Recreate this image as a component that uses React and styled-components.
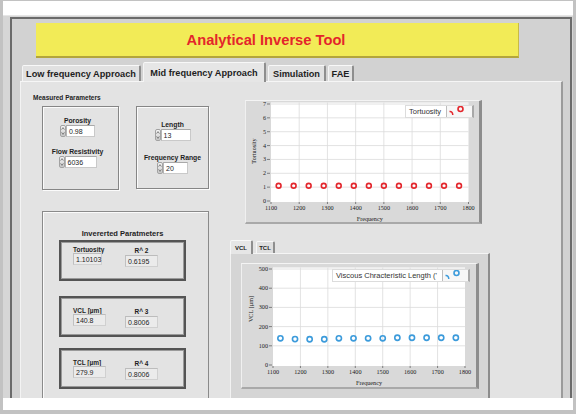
import styled, { createGlobalStyle } from "styled-components";

const GlobalStyle = createGlobalStyle`
  html, body { margin: 0; padding: 0; background: #c2c2c2; }
  body { font-family: "Liberation Sans", Arial, sans-serif; color: #1e1e1e; }
`;

const Screen = styled.div`
  box-sizing: border-box;
  width: 576px;
  height: 414px;
  padding: 1px 3px 4px 3px;
  background: #c2c2c2;
  overflow: hidden;
`;

const Sheet = styled.div`
  box-sizing: border-box;
  height: 100%;
  display: flex;
  flex-direction: column;
  padding: 14px 0 12px;
  background: #fff;
`;

const Window = styled.div`
  flex: 1;
  min-height: 0;
  display: flex;
  padding: 1px 1px 0 7px;
  border-top: 1px solid #e6e6e6;
  background: #d6d6d6;
`;

const Frame = styled.div`
  flex: 1;
  min-width: 0;
  display: flex;
  flex-direction: column;
  border: 2px solid #6b6b6b;
  border-bottom: none;
  background: #d2d2d2;
  overflow: hidden;
`;

const Banner = styled.div`
  box-sizing: border-box;
  height: 35px;
  margin: 4px 51px 0 24px;
  padding-right: 22px;
  display: flex;
  align-items: center;
  justify-content: center;
  background: #f2eb57;
  border-bottom: 2px solid #b3a53c;
  border-right: 1px solid #c9bb44;
`;

const Title = styled.h1`
  margin: 0;
  font-size: 14.7px;
  font-weight: bold;
  color: #e4252b;
`;

const TabRow = styled.div`
  display: flex;
  align-items: flex-end;
  gap: 2px;
  height: 19px;
  margin: 4px 0 0 10px;
`;

const Tab = styled.div`
  position: relative;
  z-index: ${(p) => (p.$active ? 1 : 0)};
  box-sizing: border-box;
  width: ${(p) => p.$w}px;
  height: ${(p) => (p.$active ? 20 : 16)}px;
  margin-bottom: ${(p) => (p.$active ? -1 : 0)}px;
  display: flex;
  align-items: center;
  justify-content: center;
  padding-top: ${(p) => (p.$active ? 0 : 1)}px;
  font-size: 9.2px;
  font-weight: bold;
  white-space: nowrap;
  background: ${(p) => (p.$active ? "#e6e6e6" : "#e1e1e1")};
  border-top: 1px solid #f8f8f8;
  border-left: 1px solid #f4f4f4;
  border-right: 2px solid #8e8e8e;
  border-radius: 2px 2px 0 0;
`;

const Panel = styled.div`
  flex: 1;
  min-height: 0;
  margin: 0 7px 0 8px;
  display: grid;
  grid-template-columns: 209px 1fr;
  background: #e3e3e3;
  border-top: 1px solid #f6f6f6;
  border-left: 1px solid #f3f3f3;
  border-right: 2px solid #9b9b9b;
`;

const LeftCol = styled.div`
  display: flex;
  flex-direction: column;
  min-height: 0;
  padding: 12px 0 0 12px;
`;

const SectionLabel = styled.div`
  font-size: 6.5px;
  line-height: 8px;
  font-weight: bold;
`;

const BoxRow = styled.div`
  display: flex;
  gap: 17px;
  margin: 4px 0 0 9px;
`;

const GroupBox = styled.div`
  box-sizing: border-box;
  width: ${(p) => p.$w}px;
  height: ${(p) => p.$h}px;
  display: flex;
  flex-direction: column;
  align-items: center;
  gap: ${(p) => p.$gap}px;
  padding: ${(p) => p.$pt}px ${(p) => p.$pr || 0}px 0 0;
  border: 1px solid #868686;
  box-shadow: inset 1px 1px 0 #fbfbfb, 1px 1px 0 #fbfbfb;
`;

const Control = styled.div`
  display: flex;
  flex-direction: column;
  align-items: center;
`;

const CtlLabel = styled.div`
  font-size: 6.8px;
  line-height: 8px;
  font-weight: bold;
  white-space: nowrap;
`;

const FieldRow = styled.div`
  display: flex;
  align-items: center;
`;

const SpinBox = styled.span`
  box-sizing: border-box;
  width: 6px;
  height: 12px;
  display: block;
  border: 1px solid #a2a2a2;
  border-radius: 2px;
  background: linear-gradient(#f6f6f6, #c9c9c9);
`;

const Input = styled.div`
  box-sizing: border-box;
  width: ${(p) => p.$w}px;
  height: 12px;
  padding-left: 2px;
  font-size: 7px;
  line-height: 11px;
  background: #fff;
  border: 1px solid #c9c9c9;
  border-top-color: #a9a9a9;
  border-left-color: #b5b5b5;
`;

const InvertedBox = styled.div`
  box-sizing: border-box;
  flex: 1;
  width: 167px;
  margin: 21px 0 0 9px;
  padding-top: 17px;
  display: flex;
  flex-direction: column;
  align-items: flex-start;
  border: 1px solid #8a8a8a;
  border-bottom: none;
  box-shadow: inset 1px 1px 0 #fafafa;
`;

const BoxTitle = styled.div`
  align-self: center;
  padding-right: 6px;
  font-size: 7.5px;
  line-height: 9px;
  font-weight: bold;
`;

const IndicatorBox = styled.div`
  box-sizing: border-box;
  width: 127px;
  height: 41px;
  margin: ${(p) => p.$mt}px 0 0 16px;
  padding: ${(p) => p.$pt + 1}px 0 0 12px;
  display: flex;
  border: 2px solid #545454;
  box-shadow: inset 0 0 0 1px #9a9a9a;
`;

const IndCol = styled.div`
  width: ${(p) => p.$w}px;
  display: flex;
  flex-direction: column;
  align-items: ${(p) => (p.$center ? "center" : "flex-start")};
  padding-top: ${(p) => (p.$center ? 1 : 0)}px;
`;

const IndLabel = styled.div`
  font-size: 6.5px;
  line-height: 7px;
  font-weight: bold;
  white-space: nowrap;
`;

const IndValue = styled.div`
  box-sizing: border-box;
  width: ${(p) => p.$w}px;
  height: 12px;
  margin-top: ${(p) => (p.$center ? 1 : 0)}px;
  padding-left: 2px;
  font-size: 7px;
  line-height: 11px;
  background: #ebebeb;
  border: 1px solid #d0d0d0;
  border-top-color: #bcbcbc;
  border-left-color: #c0c0c0;
`;

const RightCol = styled.div`
  display: flex;
  flex-direction: column;
  min-height: 0;
  padding-top: 18px;
`;

const ChartFrame = styled.div`
  position: relative;
  box-sizing: border-box;
  flex: none;
  width: ${(p) => p.$w}px;
  height: ${(p) => p.$h}px;
  margin-left: ${(p) => p.$ml || 0}px;
  background: #d9d9d9;
  border-top: 1px solid #f4f4f4;
  border-left: 1px solid #f0f0f0;
  border-right: 3px solid #8d8d8d;
  border-bottom: 2px solid #a9a9a9;

  svg.plot {
    display: block;
  }
`;

const Legend = styled.div`
  position: absolute;
  left: ${(p) => p.$x}px;
  top: ${(p) => p.$y}px;
  box-sizing: border-box;
  height: 13px;
  display: flex;
  align-items: center;
  background: #fff;
  border: 1px solid #dcdcdc;
  border-right: 2px solid #a8a8a8;
`;

const LegendText = styled.span`
  padding: 0 5px 0 3px;
  font-size: 7.5px;
  color: #333;
  white-space: nowrap;
`;

const Swatch = styled.span`
  display: block;
  width: 25px;
  height: 11px;
  border-left: 1px solid #bdbdbd;
  background: #f7f7f7;
`;

const ChartTabs = styled.div`
  flex: 1;
  min-height: 0;
  width: 260px;
  margin-top: 16px;
  display: flex;
  flex-direction: column;
`;

const ChartTabRow = styled.div`
  display: flex;
  align-items: flex-end;
  gap: 3px;
  height: 13px;
`;

const ChartTab = styled.div`
  position: relative;
  z-index: ${(p) => (p.$active ? 1 : 0)};
  box-sizing: border-box;
  width: ${(p) => p.$w}px;
  height: ${(p) => (p.$active ? 14 : 12)}px;
  margin-bottom: ${(p) => (p.$active ? -1 : 0)}px;
  display: flex;
  align-items: center;
  justify-content: center;
  font-size: 6px;
  font-weight: bold;
  background: ${(p) => (p.$active ? "#e6e6e6" : "#dedede")};
  border-top: 1px solid #f8f8f8;
  border-left: 1px solid #f6f6f6;
  border-right: 2px solid #8e8e8e;
  border-radius: 2px 2px 0 0;
`;

const ChartTabPanel = styled.div`
  flex: 1;
  min-height: 0;
  padding: 9px 0 0 10px;
  background: #d5d5d5;
  border-top: 1px solid #f5f5f5;
  border-left: 1px solid #f2f2f2;
  border-right: 2px solid #8c8c8c;
`;

const SpinArrows = () => (
  <SpinBox>
    <svg width="4" height="10" viewBox="0 0 4 10" style={{ display: "block" }}>
      <path d="M0.6 3.6 L2 1.6 L3.4 3.6" fill="none" stroke="#555" strokeWidth="0.7" />
      <path d="M0.6 6.4 L2 8.4 L3.4 6.4" fill="none" stroke="#555" strokeWidth="0.7" />
    </svg>
  </SpinBox>
);

const NumField = ({ label, value, w }) => (
  <Control>
    <CtlLabel>{label}</CtlLabel>
    <FieldRow>
      <SpinArrows />
      <Input $w={w}>{value}</Input>
    </FieldRow>
  </Control>
);

const Indicator = ({ label, value, rLabel, rValue, mt, pt, w }) => (
  <IndicatorBox $mt={mt} $pt={pt}>
    <IndCol $w={52}>
      <IndLabel>{label}</IndLabel>
      <IndValue $w={w}>{value}</IndValue>
    </IndCol>
    <IndCol $w={33} $center>
      <IndLabel>{rLabel}</IndLabel>
      <IndValue $w={33} $center>{rValue}</IndValue>
    </IndCol>
  </IndicatorBox>
);

const MarkerSwatch = ({ color }) => (
  <Swatch>
    <svg width="24" height="11" viewBox="0 0 24 11" style={{ display: "block" }}>
      <path d="M2.5 5.6 Q5.6 5.2 5.8 9" fill="none" stroke={color} strokeWidth="1.5" />
      <circle cx="13.5" cy="3" r="2.5" fill="none" stroke={color} strokeWidth="1.6" />
    </svg>
  </Swatch>
);

const freqs = Array.from({ length: 13 }, (_, i) => 1127 + 53.3 * i);
const tortuosity = freqs.map(() => 1.1);
const vcl = [139, 135, 134, 134, 139, 139, 139, 139, 142, 142, 142, 142, 142];
const xTicks = [1100, 1200, 1300, 1400, 1500, 1600, 1700, 1800];

const Plot = ({ w, h, x0, x1, yTop, yBot, yMax, yStep, yTitle, yTitleX, yTitleY, values, color, r }) => {
  const fx = (f) => x0 + ((f - 1100) / 700) * (x1 - x0);
  const fy = (v) => yBot - (v / yMax) * (yBot - yTop);
  const yTicks = [];
  for (let v = 0; v <= yMax; v += yStep) yTicks.push(v);
  const axisFont = { fontFamily: "'Liberation Serif', serif", fontSize: 6.2, fill: "#222" };
  return (
    <svg className="plot" width={w} height={h} viewBox={`0 0 ${w} ${h}`}>
      <rect x={x0} y={yTop - 1.5} width={x1 - x0} height={yBot - yTop + 2.5} fill="#fff" />
      {xTicks.slice(1, -1).map((t) => (
        <line key={t} x1={fx(t)} x2={fx(t)} y1={yTop - 1.5} y2={yBot + 1} stroke="#dadada" strokeWidth="0.8" />
      ))}
      {yTicks.slice(1).map((v) => (
        <line key={v} x1={x0} x2={x1} y1={fy(v)} y2={fy(v)} stroke="#dadada" strokeWidth="0.8" />
      ))}
      {yTicks.map((v) => (
        <g key={v}>
          <line x1={x0 - 4} x2={x0 - 1} y1={fy(v)} y2={fy(v)} stroke="#555" strokeWidth="0.7" />
          <text x={x0 - 5} y={fy(v) + 2} textAnchor="end" style={axisFont}>
            {v}
          </text>
        </g>
      ))}
      {xTicks.map((t) => (
        <g key={t}>
          <line x1={fx(t)} x2={fx(t)} y1={yBot + 1} y2={yBot + 3} stroke="#555" strokeWidth="0.7" />
          <text x={fx(t)} y={yBot + 9} textAnchor="middle" style={axisFont}>
            {t}
          </text>
        </g>
      ))}
      <text x={(x0 + x1) / 2} y={yBot + 19.5} textAnchor="middle" style={axisFont}>
        Frequency
      </text>
      <text
        transform={`translate(${yTitleX} ${yTitleY}) rotate(-90)`}
        textAnchor="middle"
        style={axisFont}
      >
        {yTitle}
      </text>
      {values.map((v, i) => (
        <circle key={i} cx={fx(freqs[i])} cy={fy(v)} r={r} fill="none" stroke={color} strokeWidth="1.6" />
      ))}
    </svg>
  );
};

export default function App() {
  return (
    <>
      <GlobalStyle />
      <Screen>
        <Sheet>
          <Window>
            <Frame>
              <Banner>
                <Title>Analytical Inverse Tool</Title>
              </Banner>
              <TabRow>
                <Tab $w={119}>Low frequency Approach</Tab>
                <Tab $w={123} $active>
                  Mid frequency Approach
                </Tab>
                <Tab $w={58}>Simulation</Tab>
                <Tab $w={26}>FAE</Tab>
              </TabRow>
              <Panel>
                <LeftCol>
                  <SectionLabel>Measured Parameters</SectionLabel>
                  <BoxRow>
                    <GroupBox $w={77} $h={84} $pt={10} $pr={6} $gap={11}>
                      <NumField label="Porosity" value="0.98" w={29} />
                      <NumField label="Flow Resistivity" value="6036" w={32} />
                    </GroupBox>
                    <GroupBox $w={73} $h={83} $pt={14} $gap={13}>
                      <NumField label="Length" value="13" w={30} />
                      <NumField label="Frequency Range" value="20" w={25} />
                    </GroupBox>
                  </BoxRow>
                  <InvertedBox>
                    <BoxTitle>Invererted Paratmeters</BoxTitle>
                    <Indicator label="Tortuosity" value="1.10103" rLabel="R^ 2" rValue="0.6195" mt={2} pt={3} w={29} />
                    <Indicator label="VCL [µm]" value="140.8" rLabel="R^ 3" rValue="0.8006" mt={15} pt={8} w={33} />
                    <Indicator label="TCL [µm]" value="279.9" rLabel="R^ 4" rValue="0.8006" mt={11} pt={8} w={33} />
                  </InvertedBox>
                </LeftCol>
                <RightCol>
                  <ChartFrame $w={237} $h={124} $ml={15}>
                    <Plot
                      w={233}
                      h={121}
                      x0={25}
                      x1={222.5}
                      yTop={3}
                      yBot={100}
                      yMax={7}
                      yStep={1}
                      yTitle="Tortuosity"
                      yTitleX={10}
                      yTitleY={50}
                      values={tortuosity}
                      color="#e3262c"
                      r={2.4}
                    />
                    <Legend $x={159} $y={4}>
                      <LegendText>Tortuosity</LegendText>
                      <MarkerSwatch color="#e3262c" />
                    </Legend>
                  </ChartFrame>
                  <ChartTabs>
                    <ChartTabRow>
                      <ChartTab $w={23} $active>
                        VCL
                      </ChartTab>
                      <ChartTab $w={19}>TCL</ChartTab>
                    </ChartTabRow>
                    <ChartTabPanel>
                      <ChartFrame $w={238} $h={126}>
                        <Plot
                          w={234}
                          h={123}
                          x0={31}
                          x1={223}
                          yTop={5}
                          yBot={101}
                          yMax={500}
                          yStep={100}
                          yTitle="VCL [µm]"
                          yTitleX={11}
                          yTitleY={45}
                          values={vcl}
                          color="#3c9bdb"
                          r={2.6}
                        />
                        <Legend $x={90} $y={5}>
                          <LegendText>Viscous Chracteristic Length ('</LegendText>
                          <MarkerSwatch color="#3c9bdb" />
                        </Legend>
                      </ChartFrame>
                    </ChartTabPanel>
                  </ChartTabs>
                </RightCol>
              </Panel>
            </Frame>
          </Window>
        </Sheet>
      </Screen>
    </>
  );
}
